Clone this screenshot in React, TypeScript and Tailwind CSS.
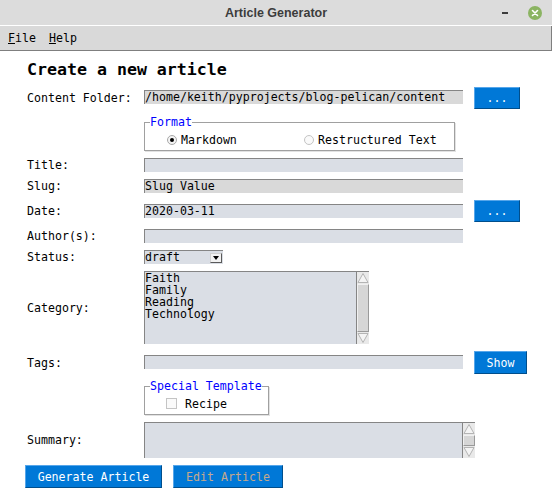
import React from "react";

function UpArrow() {
  return (
    <svg width="12" height="12" viewBox="0 0 12 12" className="block">
      <rect x="0" y="0" width="12" height="12" fill="#e9e9e9" />
      <polygon points="6,1.5 11,10.5 1,10.5" fill="#f4f4f4" stroke="#b4b4b4" strokeWidth="1" />
    </svg>
  );
}

function DownArrow() {
  return (
    <svg width="12" height="12" viewBox="0 0 12 12" className="block">
      <rect x="0" y="0" width="12" height="12" fill="#e9e9e9" />
      <polygon points="1,1.5 11,1.5 6,10.5" fill="#f4f4f4" stroke="#b4b4b4" strokeWidth="1" />
    </svg>
  );
}

function BlueButton({ children, className }: { children: React.ReactNode; className: string }) {
  return (
    <div
      className={
        "flex items-center justify-center bg-[#0078d7] border border-t-[#56a6ea] border-l-[#56a6ea] border-b-[#004e8c] border-r-[#004e8c] text-white " +
        className
      }
    >
      {children}
    </div>
  );
}

export default function App() {
  return (
    <div className="w-[552px] h-[495px] overflow-hidden bg-white text-black font-['DejaVu_Sans_Mono',monospace] text-[11.6px] leading-[14px]">
      {/* Title bar */}
      <div className="h-[25px] bg-[#dcdcdc] flex items-center">
        <div className="w-[76px]" />
        <div className="flex-1 text-center font-['Liberation_Sans',Arial,sans-serif] font-bold text-[12.5px] text-[#3c3c3c]">
          Article Generator
        </div>
        <div className="w-[76px] flex items-center">
          <div className="ml-[26px] w-[6px] h-[2px] bg-[#3c3c3c]" />
          <div className="ml-[20px] w-[14px] h-[14px] rounded-full bg-[#8bb462] flex items-center justify-center">
            <svg width="8" height="8" viewBox="0 0 8 8">
              <path d="M1.5 1.5 L6.5 6.5 M6.5 1.5 L1.5 6.5" stroke="#ffffff" strokeWidth="1.6" strokeLinecap="round" />
            </svg>
          </div>
        </div>
      </div>
      <div className="h-px bg-white" />
      {/* Menu bar */}
      <div className="w-[552px] h-[25px] bg-[#d9d9d9] border-b border-r border-[#7f7f7f] flex items-center pl-[8px] gap-[13px]">
        <span>
          <span className="underline underline-offset-[1px]">F</span>ile
        </span>
        <span>
          <span className="underline underline-offset-[1px]">H</span>elp
        </span>
      </div>

      {/* Content */}
      <div className="pl-[27px] flex flex-col">
        <div className="mt-[9px] h-[20px] leading-[20px] text-[16.6px] font-bold">Create a new article</div>

        {/* Content Folder */}
        <div className="mt-[7px] h-[22px] flex items-start">
          <div className="w-[117px] mt-[4px]">Content Folder:</div>
          <div className="mt-[3px] w-[319px] h-[14px] bg-[#d9d9d9] border-t border-l border-[#858585] leading-[13px] whitespace-nowrap overflow-hidden">
            /home/keith/pyprojects/blog-pelican/content
          </div>
          <BlueButton className="ml-[11px] w-[46px] h-[22px]">...</BlueButton>
        </div>

        {/* Format */}
        <div className="mt-[13px] ml-[117px] relative w-[311px] h-[29px] border border-[#a0a0a0] shadow-[1px_1px_0_#e2e2e2]">
          <span className="absolute left-[5px] -top-[8px] bg-white text-[#0000ff] leading-[14px]">Format</span>
          <div className="mt-[12px] pl-[22px] flex items-center h-[10px]">
            <div className="w-[137px] flex items-center">
              <div className="w-[10px] h-[10px] rounded-full border border-[#a8a8a8] bg-[#f4f4f4] flex items-center justify-center">
                <div className="w-[4px] h-[4px] rounded-full bg-black" />
              </div>
              <span className="ml-[4px]">Markdown</span>
            </div>
            <div className="flex items-center">
              <div className="w-[10px] h-[10px] rounded-full border border-[#c4c4c4] bg-[#fafafa]" />
              <span className="ml-[4px]">Restructured Text</span>
            </div>
          </div>
        </div>

        {/* Title */}
        <div className="mt-[7px] h-[14px] flex items-center">
          <div className="w-[117px]">Title:</div>
          <div className="w-[319px] h-[14px] bg-[#dadee5] border-t border-l border-[#858585]" />
        </div>

        {/* Slug */}
        <div className="mt-[7px] h-[14px] flex items-center">
          <div className="w-[117px]">Slug:</div>
          <div className="w-[319px] h-[14px] bg-[#d9d9d9] border-t border-l border-[#858585] leading-[13px]">Slug Value</div>
        </div>

        {/* Date */}
        <div className="mt-[7px] h-[22px] flex items-start">
          <div className="w-[117px] mt-[4px]">Date:</div>
          <div className="mt-[4px] w-[319px] h-[14px] bg-[#dadee5] border-t border-l border-[#858585] leading-[13px]">2020-03-11</div>
          <BlueButton className="ml-[11px] w-[46px] h-[22px]">...</BlueButton>
        </div>

        {/* Author */}
        <div className="mt-[7px] h-[14px] flex items-center">
          <div className="w-[117px]">Author(s):</div>
          <div className="w-[319px] h-[14px] bg-[#dadee5] border-t border-l border-[#858585]" />
        </div>

        {/* Status */}
        <div className="mt-[7px] h-[14px] flex items-center">
          <div className="w-[117px]">Status:</div>
          <div className="w-[79px] h-[14px] bg-[#dadee5] border-t border-l border-[#858585] flex items-center leading-[13px]">
            <span className="flex-1">draft</span>
            <div className="mr-px w-[12px] h-[10px] bg-[#f2f2f2] border border-t-[#d0d0d0] border-l-[#d0d0d0] border-b-[#5a5a5a] border-r-[#5a5a5a] flex items-center justify-center">
              <svg width="6" height="4" viewBox="0 0 6 4">
                <polygon points="0,0 6,0 3,4" fill="#000" />
              </svg>
            </div>
          </div>
        </div>

        {/* Category */}
        <div className="mt-[7px] h-[73px] flex items-center">
          <div className="w-[117px]">Category:</div>
          <div className="w-[225px] h-[73px] bg-[#dadee5] border-t border-l border-[#858585] flex overflow-hidden">
            <div className="flex-1 leading-[12px]">
              <div>Faith</div>
              <div>Family</div>
              <div>Reading</div>
              <div>Technology</div>
            </div>
            <div className="w-[13px] border-l border-[#858585] flex flex-col">
              <UpArrow />
              <div className="h-[48px] bg-[#d6d6d6] border border-t-[#f0f0f0] border-l-[#f0f0f0] border-b-[#9a9a9a] border-r-[#9a9a9a]" />
              <DownArrow />
            </div>
          </div>
        </div>

        {/* Tags */}
        <div className="mt-[7px] h-[23px] flex items-start">
          <div className="w-[117px] mt-[5px]">Tags:</div>
          <div className="mt-[4px] w-[319px] h-[14px] bg-[#dadee5] border-t border-l border-[#858585]" />
          <BlueButton className="ml-[11px] w-[53px] h-[23px]">Show</BlueButton>
        </div>

        {/* Special Template */}
        <div className="mt-[12px] ml-[117px] relative w-[125px] h-[29px] border border-[#a0a0a0] shadow-[1px_1px_0_#e2e2e2]">
          <span className="absolute left-[5px] -top-[8px] bg-white text-[#0000ff] leading-[14px] whitespace-nowrap">Special Template</span>
          <div className="mt-[11px] pl-[21px] flex items-center h-[11px]">
            <div className="w-[11px] h-[11px] border border-[#c4c4c4] bg-[#fafafa]" />
            <span className="ml-[8px]">Recipe</span>
          </div>
        </div>

        {/* Summary */}
        <div className="mt-[7px] h-[36px] flex items-center">
          <div className="w-[117px]">Summary:</div>
          <div className="w-[331px] h-[36px] bg-[#dadee5] border-t border-l border-[#858585] flex overflow-hidden">
            <div className="flex-1" />
            <div className="w-[13px] border-l border-[#858585] flex flex-col">
              <UpArrow />
              <div className="h-[11px] bg-[#d6d6d6] border border-t-[#f0f0f0] border-l-[#f0f0f0] border-b-[#9a9a9a] border-r-[#9a9a9a]" />
              <DownArrow />
            </div>
          </div>
        </div>

        {/* Bottom buttons */}
        <div className="mt-[7px] -ml-[2px] flex items-center gap-[11px]">
          <BlueButton className="w-[137px] h-[23px]">Generate Article</BlueButton>
          <BlueButton className="w-[110px] h-[23px]">
            <span className="text-[#c4a98d]">Edit Article</span>
          </BlueButton>
        </div>
      </div>
    </div>
  );
}
